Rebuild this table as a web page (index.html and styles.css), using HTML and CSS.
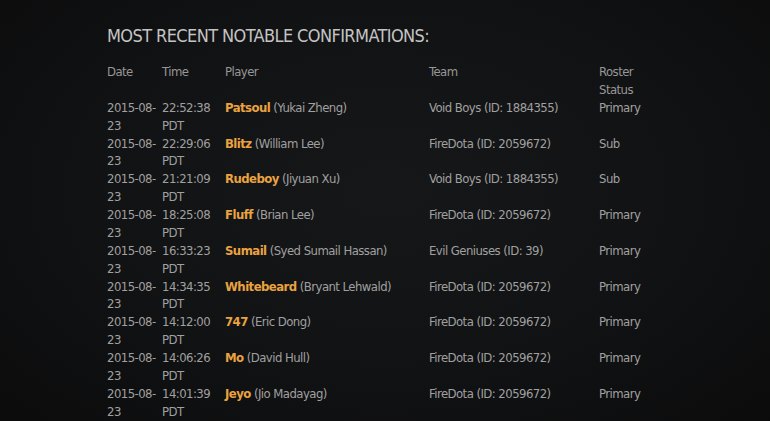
FILE: index.html
```html
<!DOCTYPE html>
<html>
<head>
<meta charset="utf-8">
<link rel="stylesheet" href="styles.css">
</head>
<body>
<div class="page">
  <h2 class="title">MOST RECENT NOTABLE CONFIRMATIONS:</h2>
  <table class="conf">
    <colgroup>
      <col class="c-date"><col class="c-time"><col class="c-player"><col class="c-team"><col class="c-roster">
    </colgroup>
    <thead>
      <tr><th>Date</th><th>Time</th><th>Player</th><th>Team</th><th>Roster Status</th></tr>
    </thead>
    <tbody>
      <tr><td>2015-08-23</td><td>22:52:38 PDT</td><td><span class="nick">Patsoul</span> (Yukai Zheng)</td><td>Void Boys (ID: 1884355)</td><td>Primary</td></tr>
      <tr><td>2015-08-23</td><td>22:29:06 PDT</td><td><span class="nick">Blitz</span> (William Lee)</td><td>FireDota (ID: 2059672)</td><td>Sub</td></tr>
      <tr><td>2015-08-23</td><td>21:21:09 PDT</td><td><span class="nick">Rudeboy</span> (Jiyuan Xu)</td><td>Void Boys (ID: 1884355)</td><td>Sub</td></tr>
      <tr><td>2015-08-23</td><td>18:25:08 PDT</td><td><span class="nick">Fluff</span> (Brian Lee)</td><td>FireDota (ID: 2059672)</td><td>Primary</td></tr>
      <tr><td>2015-08-23</td><td>16:33:23 PDT</td><td><span class="nick">Sumail</span> (Syed Sumail Hassan)</td><td>Evil Geniuses (ID: 39)</td><td>Primary</td></tr>
      <tr><td>2015-08-23</td><td>14:34:35 PDT</td><td><span class="nick">Whitebeard</span> (Bryant Lehwald)</td><td>FireDota (ID: 2059672)</td><td>Primary</td></tr>
      <tr><td>2015-08-23</td><td>14:12:00 PDT</td><td><span class="nick">747</span> (Eric Dong)</td><td>FireDota (ID: 2059672)</td><td>Primary</td></tr>
      <tr><td>2015-08-23</td><td>14:06:26 PDT</td><td><span class="nick">Mo</span> (David Hull)</td><td>FireDota (ID: 2059672)</td><td>Primary</td></tr>
      <tr><td>2015-08-23</td><td>14:01:39 PDT</td><td><span class="nick">Jeyo</span> (Jio Madayag)</td><td>FireDota (ID: 2059672)</td><td>Primary</td></tr>
    </tbody>
  </table>
</div>
</body>
</html>
```

FILE: styles.css
```css
html, body {
  margin: 0;
  padding: 0;
  height: 100%;
}
body {
  background: radial-gradient(ellipse 70% 80% at 50% 45%, #161718 0%, #111213 55%, #0b0b0c 100%);
  color: #a0a0a0;
  font-family: "DejaVu Sans Condensed", "Liberation Sans", sans-serif;
  overflow: hidden;
}
.page {
  padding: 25px 0 0 107px;
}
.title {
  margin: 0 0 16px 0;
  font-family: "DejaVu Sans Condensed", "Liberation Sans", sans-serif;
  font-weight: normal;
  font-size: 18px;
  line-height: 22px;
  color: #c4c4c4;
  letter-spacing: -0.6px;
}
.conf {
  border-collapse: collapse;
  table-layout: fixed;
  width: 545px;
  font-size: 13px;
  line-height: 17.875px;
  letter-spacing: -0.55px;
}
.c-date { width: 55px; }
.c-time { width: 63px; }
.c-player { width: 204px; }
.c-team { width: 170px; }
.c-roster { width: 53px; }
.conf th, .conf td {
  padding: 0;
  text-align: left;
  vertical-align: top;
  font-weight: normal;
}
.conf th {
  color: #979797;
}
.nick {
  color: #eaa340;
  font-weight: bold;
}
```
